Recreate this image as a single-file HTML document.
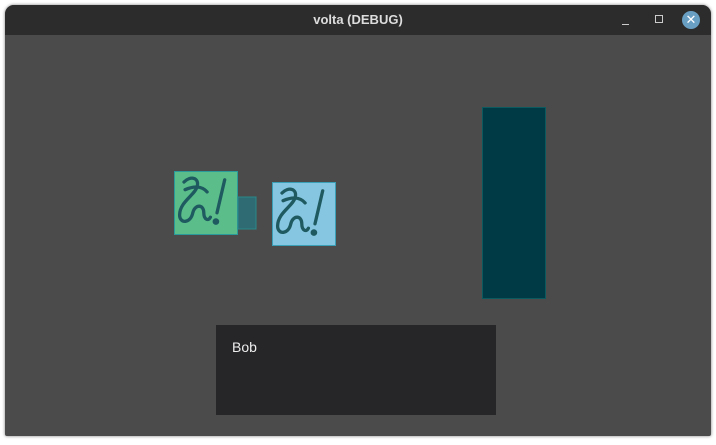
<!DOCTYPE html>
<html><head><style>
body{margin:0;width:716px;height:445px;background:#fff;position:relative;overflow:hidden;font-family:"Liberation Sans",sans-serif}
.win{position:absolute;left:5px;top:5px;width:706px;height:431px;background:#4b4b4b;border-radius:9px 9px 2px 2px;overflow:hidden;box-shadow:0 0 3px rgba(0,0,0,.5)}
.tb{position:absolute;left:0;top:0;width:706px;height:30px;background:#2c2c2c;color:#ddd;font-size:13px;font-weight:bold;text-align:center;line-height:30px}
.a{position:absolute}
</style></head><body>
<div class="win">
<div class="tb">volta (DEBUG)</div>
<div class="a" style="left:617px;top:19px;width:7px;height:1px;background:#ccc"></div>
<div class="a" style="left:650px;top:10px;width:6px;height:6px;border:1px solid #ccc"></div>
<div class="a" style="left:677px;top:6px;width:18px;height:18px;border-radius:50%;background:#6a9fc4;color:#fff;font-size:13px;line-height:18px;text-align:center">✕</div>
</div>
<svg class="a" style="left:0;top:0" width="716" height="445">
<defs><g id="g" fill="none" stroke="#1e5a60" stroke-width="3" stroke-linecap="round" transform="translate(-1,0) scale(1.1)">
<path d="M10 10 C16 4 24 6 22 14 C20 22 6 28 6 40 C6 48 16 48 18 38 C20 30 28 30 28 38 C28 44 32 46 34 42"/>
<path d="M11 17 C18 14 26 13 31 19"/>
<path d="M47 8 L40 38"/>
<circle cx="39" cy="46" r="3" fill="#1e5a60" stroke="none"/>
</g></defs>
<rect x="174.5" y="171.5" width="63" height="63" fill="#5bbe8a" stroke="#2a9a9a"/>
<use href="#g" x="174" y="171"/>
<rect x="238" y="197" width="18" height="32" fill="#2e6b73" stroke="#2a8a8a"/>
<rect x="272.5" y="182.5" width="63" height="63" fill="#86c6e0" stroke="#3aa0b8"/>
<use href="#g" x="272" y="182"/>
<rect x="482.5" y="107.5" width="63" height="191" fill="#003a45" stroke="#0b5a60"/>
<rect x="216" y="325" width="280" height="90" fill="#262629"/>
<text x="232" y="352" fill="#eee" font-size="14" font-family="Liberation Sans, sans-serif">Bob</text>
</svg>
</body></html>
